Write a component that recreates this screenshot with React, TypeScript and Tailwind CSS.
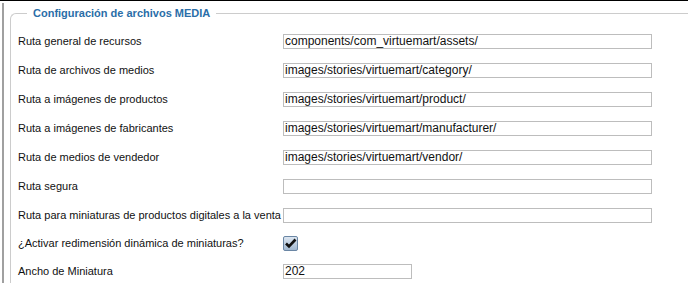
import React from "react";

interface Row {
  label: string;
  value?: string;
  kind?: "text" | "short" | "check";
}

const rows: Row[] = [
  { label: "Ruta general de recursos", value: "components/com_virtuemart/assets/" },
  { label: "Ruta de archivos de medios", value: "images/stories/virtuemart/category/" },
  { label: "Ruta a imágenes de productos", value: "images/stories/virtuemart/product/" },
  { label: "Ruta a imágenes de fabricantes", value: "images/stories/virtuemart/manufacturer/" },
  { label: "Ruta de medios de vendedor", value: "images/stories/virtuemart/vendor/" },
  { label: "Ruta segura", value: "" },
  { label: "Ruta para miniaturas de productos digitales a la venta", value: "" },
  { label: "¿Activar redimensión dinámica de miniaturas?", kind: "check" },
  { label: "Ancho de Miniatura", value: "202", kind: "short" },
];

const CheckBox: React.FC = () => (
  <svg width="15" height="15" viewBox="0 0 15 15">
    <defs>
      <linearGradient id="cb" x1="0" y1="0" x2="0" y2="1">
        <stop offset="0" stopColor="#dfe8f2" />
        <stop offset="1" stopColor="#9fb6cf" />
      </linearGradient>
    </defs>
    <rect x="0.5" y="0.5" width="14" height="14" rx="1.5" fill="url(#cb)" stroke="#6a86a4" />
    <path d="M3 7.5 L6 10.5 L12.5 3.5" fill="none" stroke="#111" strokeWidth="2.6" />
  </svg>
);

export default function App() {
  return (
    <div
      className="w-[688px] h-[283px] overflow-hidden bg-white border-t border-black"
      style={{ fontFamily: '"Liberation Sans", Arial, sans-serif' }}
    >
      <div className="ml-[2px] mt-[2px] h-full border-l-2 border-[#a0a0a0] pl-[6px] pt-[3px]">
        <fieldset className="border border-[#cccccc] border-r-0 rounded-tl-[6px] pl-[7px] pt-[7px]">
          <legend className="ml-[9px] px-[6px] text-[11px] leading-[14px] font-bold text-[#2a6ea8]">
            Configuración de archivos MEDIA
          </legend>
          <div className="flex flex-col">
            {rows.map((r) => (
              <div
                key={r.label}
                className={(r.kind === "check" ? "h-[27px]" : "h-[29px]") + " flex items-center"}
              >
                <div className="w-[265px] whitespace-nowrap text-[11px] text-[#111]">{r.label}</div>
                {r.kind === "check" ? (
                  <CheckBox />
                ) : (
                  <div
                    className={
                      (r.kind === "short" ? "w-[129px]" : "w-[369px]") +
                      " h-[15px] border border-[#bdbdbd] bg-white text-[12px] leading-[13px] pl-[1px] text-[#111]"
                    }
                  >
                    {r.value}
                  </div>
                )}
              </div>
            ))}
          </div>
        </fieldset>
      </div>
    </div>
  );
}
